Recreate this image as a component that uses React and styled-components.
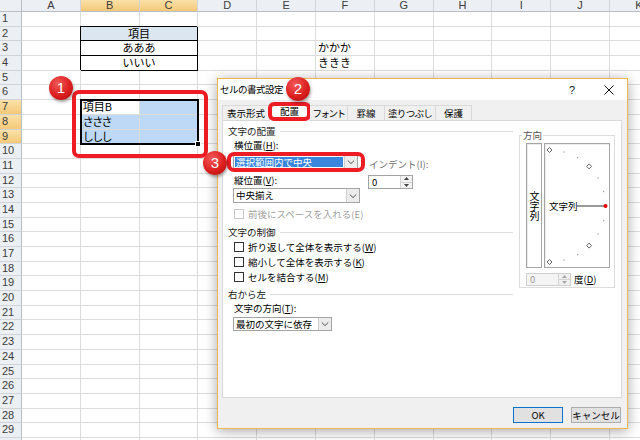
import React from 'react';
import styled, { createGlobalStyle } from 'styled-components';

const COL_W = 58.8;
const ROW_H = 14.7;
const ROW_COUNT = 30;
const COLS = ['A', 'B', 'C', 'D', 'E', 'F', 'G', 'H', 'I', 'J', 'K'];
const SELECTED_COLS = ['B', 'C'];
const SELECTED_ROWS = [7, 8, 9];

const GlobalStyle = createGlobalStyle`
  * { box-sizing: border-box; }
  html, body { margin: 0; padding: 0; background: #fff; }
  body {
    font-family: 'Noto Sans CJK JP', 'Liberation Sans', sans-serif;
    overflow: hidden;
  }
`;

const Screen = styled.div`
  position: relative;
  width: 640px;
  height: 440px;
  overflow: hidden;
`;

const sheetTemplate = `
  grid-template-columns: 22px repeat(${COLS.length}, ${COL_W}px);
  grid-template-rows: 12px repeat(${ROW_COUNT}, ${ROW_H}px);
`;

const Sheet = styled.div`
  display: grid;
  ${sheetTemplate}
`;

const OverlayGrid = styled.div`
  position: absolute;
  inset: 0;
  display: grid;
  ${sheetTemplate}
  pointer-events: none;
`;

const headerBg = '#eceff3';
const headerOn = 'linear-gradient(#fbe1a8, #f4c978)';

const Corner = styled.div`
  background: ${headerBg};
  border-right: 1px solid #b9bec6;
  border-bottom: 1px solid #b9bec6;
`;

const ColHead = styled.div`
  background: ${(p) => (p.$on ? headerOn : headerBg)};
  border-right: 1px solid #d0d4da;
  border-bottom: 1px solid #b9bec6;
  font: 11px/11px 'Liberation Sans', sans-serif;
  color: #3c3c3c;
  text-align: center;
  overflow: hidden;
`;

const RowHead = styled.div`
  background: ${(p) => (p.$on ? headerOn : headerBg)};
  border-right: 1px solid #b9bec6;
  border-bottom: 1px solid #d0d4da;
  font: 11px/13.7px 'Liberation Sans', sans-serif;
  color: #3c3c3c;
  padding-left: 2px;
`;

const Cell = styled.div`
  background: ${(p) => (p.$fill ? '#bdd9f6' : '#fff')};
  border-right: 1px solid #dcdcdc;
  border-bottom: 1px solid #dcdcdc;
  font-size: 11px;
  line-height: 13.7px;
  padding-left: 2px;
  white-space: nowrap;
  letter-spacing: ${(p) => (p.$tight ? '-1.6px' : '0')};
  color: #000;
`;

const TableCell = styled.div`
  grid-column: span 2;
  background: ${(p) => (p.$head ? '#dce6f1' : '#fff')};
  border-right: 1px solid #000;
  border-bottom: 1px solid #000;
  box-shadow: -1px -1px 0 #000;
  font-size: 11px;
  line-height: 13.7px;
  text-align: center;
  color: #000;
`;

const SelectionFrame = styled.div`
  grid-column: 3 / 5;
  grid-row: 8 / 11;
  margin: -1px;
  border: 2px solid #000;
  position: relative;
`;

const FillHandle = styled.span`
  position: absolute;
  right: -4px;
  bottom: -4px;
  width: 6px;
  height: 6px;
  background: #000;
  border: 1px solid #fff;
`;

const Callout = styled.div`
  border: 4px solid #ee1c24;
  border-radius: 7px;
  pointer-events: none;
`;

const SheetCallout = styled(Callout)`
  grid-column: 3 / 5;
  grid-row: 8 / 11;
  margin: -10px -10px -14px -9px;
  position: relative;
`;

const TabCallout = styled(Callout)`
  position: absolute;
  inset: -1px -2px 0 -2px;
  border-radius: 6px;
`;

const FieldCallout = styled(Callout)`
  position: absolute;
  inset: -3px -7px -3px -6px;
  border-radius: 7px;
`;

const Badge = styled.span`
  position: absolute;
  left: ${(p) => p.$x}px;
  top: ${(p) => p.$y}px;
  width: 24px;
  height: 24px;
  border-radius: 50%;
  background: radial-gradient(circle at 38% 32%, #f45a5a 0%, #dc1e1e 55%, #a90f0f 100%);
  box-shadow: 1px 2px 3px rgba(0, 0, 0, 0.35);
  color: #fff;
  font: 15px/24px 'Liberation Sans', sans-serif;
  text-align: center;
  z-index: 5;
`;

const cellText = {
  3: { F: 'かかか' },
  4: { F: 'ききき' },
  7: { B: '項目B' },
  8: { B: 'さささ' },
  9: { B: 'ししし' },
};

const tableRows = { 2: { text: '項目', head: true }, 3: { text: 'あああ' }, 4: { text: 'いいい' } };

const SheetRow = ({ row }) => {
  const onRow = SELECTED_ROWS.includes(row);
  const out = [<RowHead key="h" $on={onRow}>{row}</RowHead>];
  COLS.forEach((col) => {
    if (tableRows[row] && col === 'C') return;
    if (tableRows[row] && col === 'B') {
      out.push(
        <TableCell key={col} $head={tableRows[row].head}>
          {tableRows[row].text}
        </TableCell>
      );
      return;
    }
    const fill = onRow && SELECTED_COLS.includes(col) && !(row === 7 && col === 'B');
    out.push(
      <Cell key={col} $fill={fill} $tight={row === 8 || row === 9}>
        {(cellText[row] && cellText[row][col]) || ''}
      </Cell>
    );
  });
  return out;
};

/* ---------- dialog ---------- */

const Dialog = styled.div`
  position: absolute;
  left: 217px;
  top: 78px;
  width: 411px;
  height: 351px;
  display: flex;
  flex-direction: column;
  background: #f0f0f0;
  border: 1px solid #f1b64c;
  box-shadow: 0 2px 12px rgba(0, 0, 0, 0.35);
  font-family: 'Noto Sans CJK JP', sans-serif;
  font-size: 9.5px;
  color: #000;
`;

const TitleBar = styled.div`
  height: 21px;
  display: flex;
  align-items: center;
  background: #fff;
  padding-left: 2px;
`;

const Title = styled.div`
  flex: 1;
  line-height: 21px;
  letter-spacing: -0.5px;
`;

const TitleButton = styled.div`
  width: ${(p) => p.$w}px;
  height: 21px;
  margin-right: ${(p) => p.$mr || 0}px;
  display: flex;
  align-items: center;
  justify-content: center;
  font: 11px 'Liberation Sans', sans-serif;
  color: #222;
`;

const DialogBody = styled.div`
  flex: 1;
  display: flex;
  flex-direction: column;
  padding: 0 5px 0 4px;
`;

const TabStrip = styled.div`
  height: 20px;
  display: flex;
  align-items: flex-end;
  position: relative;
  z-index: 1;
`;

const Tab = styled.div`
  position: relative;
  width: ${(p) => p.$w}px;
  height: ${(p) => (p.$active ? 19 : 15)}px;
  margin-bottom: ${(p) => (p.$active ? -1 : 0)}px;
  background: ${(p) => (p.$active ? '#fff' : '#f0f0f0')};
  border: 1px solid #d9d9d9;
  border-left: none;
  border-bottom: none;
  line-height: ${(p) => (p.$active ? 17 : 14)}px;
  text-align: center;
  white-space: nowrap;
  letter-spacing: ${(p) => p.$ls || 0}px;

  &:first-child {
    border-left: 1px solid #d9d9d9;
  }
`;

const Panel = styled.div`
  width: 400px;
  height: 278px;
  background: #fff;
  border: 1px solid #d9d9d9;
  display: grid;
  grid-template-columns: 285px 96px;
  column-gap: 6px;
  align-items: start;
  padding: 3px 5px 0 5px;
`;

const Column = styled.div`
  display: flex;
  flex-direction: column;
`;

const SectionTitle = styled.div`
  display: flex;
  align-items: center;
  gap: 4px;
  height: 14px;
  line-height: 14px;
  margin-top: ${(p) => p.$mt || 0}px;
  color: #1a1a1a;

  &::after {
    content: '';
    flex: 1;
    border-top: 1px solid #dcdcdc;
  }
`;

const FieldLabel = styled.div`
  height: 14px;
  line-height: 14px;
  padding-left: ${(p) => (p.$flush ? 1 : 6)}px;
  margin-top: ${(p) => p.$mt || 0}px;
  color: ${(p) => (p.$dim ? '#707070' : '#000')};
  white-space: nowrap;
`;

const AlignBlock = styled.div`
  display: flex;
  align-items: flex-start;
`;

const IndentCol = styled.div`
  display: flex;
  flex-direction: column;
  margin-left: 8px;
  padding-top: 5px;
`;

const SelectWrap = styled.div`
  position: relative;
  margin: ${(p) => p.$mt || 0}px 0 0 5px;
  width: ${(p) => p.$w}px;
`;

const Select = styled.div`
  height: ${(p) => p.$h || 14}px;
  display: flex;
  border: 1px solid #a3a3a3;
  background: #fff;
`;

const SelectValue = styled.div`
  flex: 1;
  margin: 1px;
  padding-left: 1px;
  line-height: ${(p) => (p.$h || 14) - 4}px;
  background: ${(p) => (p.$picked ? '#3a86dc' : 'transparent')};
  color: ${(p) => (p.$picked ? '#fff' : '#000')};
  white-space: nowrap;
`;

const SelectArrow = styled.div`
  width: 13px;
  display: flex;
  align-items: center;
  justify-content: center;
  background: #ececec;
  border-left: 1px solid #cfcfcf;
`;

const Chevron = () => (
  <svg width="8" height="6" viewBox="0 0 8 6">
    <path d="M0.8 1.5 L4 4.6 L7.2 1.5" fill="none" stroke="#555" strokeWidth="1" />
  </svg>
);

const Spinner = styled.div`
  width: 45px;
  height: ${(p) => p.$h || 14}px;
  margin-top: ${(p) => p.$mt || 0}px;
  display: flex;
  border: 1px solid ${(p) => (p.$off ? '#cfcfcf' : '#a3a3a3')};
  background: ${(p) => (p.$off ? '#f4f4f4' : '#fff')};
  color: ${(p) => (p.$off ? '#9a9a9a' : '#000')};
`;

const SpinValue = styled.div`
  flex: 1;
  padding-left: 3px;
  line-height: ${(p) => (p.$h || 14) - 2}px;
`;

const SpinButtons = styled.div`
  width: 12px;
  display: flex;
  flex-direction: column;
  border-left: 1px solid #d4d4d4;
  background: ${(p) => (p.$off ? '#f0f0f0' : '#f3f3f3')};
`;

const SpinHalf = styled.div`
  flex: 1;
  display: flex;
  align-items: center;
  justify-content: center;

  & + & {
    border-top: 1px solid #d4d4d4;
  }
`;

const Tri = ({ down, off }) => (
  <svg width="5" height="3" viewBox="0 0 5 3">
    <path d={down ? 'M0 0 L5 0 L2.5 3 Z' : 'M0 3 L5 3 L2.5 0 Z'} fill={off ? '#a8a8a8' : '#444'} />
  </svg>
);

const SpinBox = ({ value, off, h, mt }) => (
  <Spinner $off={off} $h={h} $mt={mt}>
    <SpinValue $h={h}>{value}</SpinValue>
    <SpinButtons $off={off}>
      <SpinHalf>
        <Tri off={off} />
      </SpinHalf>
      <SpinHalf>
        <Tri down off={off} />
      </SpinHalf>
    </SpinButtons>
  </Spinner>
);

const CheckRow = styled.div`
  display: flex;
  align-items: center;
  gap: 4px;
  height: 15px;
  padding-left: 6px;
  margin-top: ${(p) => p.$mt || 0}px;
  color: ${(p) => (p.$off ? '#a0a0a0' : '#000')};
  white-space: nowrap;
`;

const CheckBox = styled.span`
  width: 10px;
  height: 10px;
  border: 1px solid ${(p) => (p.$off ? '#c8c8c8' : '#333')};
  background: #fff;
`;

const DirectionGroup = styled.div`
  margin-top: 11px;
  height: 153px;
  border: 1px solid #dcdcdc;
  display: flex;
  flex-direction: column;
  padding-left: 6px;
`;

const GroupLegend = styled.div`
  align-self: flex-start;
  margin: -7px 0 0 -4px;
  padding: 0 1px;
  background: #fff;
  line-height: 13px;
  color: #555;
`;

const OrientRow = styled.div`
  display: flex;
  gap: 2px;
  height: 125px;
  margin-top: 1px;
`;

const VerticalBox = styled.div`
  width: 16px;
  border: 1px solid #a5a5a5;
  box-shadow: inset 1px 1px 0 #ececec;
  display: flex;
  align-items: center;
  justify-content: center;
  writing-mode: vertical-rl;
  font-size: 10px;
  line-height: 14px;
`;

const ArcBox = styled.div`
  width: 66px;
  border: 1px solid #a5a5a5;
  box-shadow: inset 1px 1px 0 #ececec;
  display: flex;
`;

const DegreeRow = styled.div`
  display: flex;
  align-items: center;
  gap: 3px;
  margin-top: 4px;
`;

const Footer = styled.div`
  display: flex;
  justify-content: flex-end;
  gap: 8px;
  padding: 9px 1px 0 0;
`;

const Button = styled.div`
  width: 50px;
  height: 16px;
  border: 1px solid ${(p) => (p.$primary ? '#0a72d0' : '#adadad')};
  background: #e1e1e1;
  line-height: 14px;
  text-align: center;
  white-space: nowrap;
`;

const Key = styled.u`
  text-decoration: underline;
`;

const ArcDial = () => {
  const cx = 4.5;
  const cy = 62;
  const r = 56;
  const points = [-90, -75, -60, -45, -30, -15, 15, 30, 45, 60, 75, 90].map((deg) => {
    const a = (deg * Math.PI) / 180;
    return { deg, x: cx + r * Math.cos(a), y: cy - r * Math.sin(a) };
  });
  return (
    <svg width="64" height="123" viewBox="0 0 64 123">
      {points.map((pt) =>
        Math.abs(pt.deg) % 45 === 0 ? (
          <path
            key={pt.deg}
            d={`M${pt.x} ${pt.y - 2.5} L${pt.x + 2.5} ${pt.y} L${pt.x} ${pt.y + 2.5} L${pt.x - 2.5} ${pt.y} Z`}
            fill="#fff"
            stroke="#666"
            strokeWidth="1"
          />
        ) : (
          <rect key={pt.deg} x={pt.x - 0.5} y={pt.y - 0.5} width="1.2" height="1.2" fill="#9a9a9a" />
        )
      )}
      <text x="4" y="65.5" fontSize="9.5" fontFamily="'Noto Sans CJK JP', sans-serif" fill="#000">
        文字列
      </text>
      <line x1="32" y1="62" x2="59" y2="62" stroke="#333" strokeWidth="1" />
      <circle cx={cx + r} cy={cy} r="2" fill="#e00000" />
    </svg>
  );
};

const CellFormatDialog = () => (
  <Dialog>
    <TitleBar>
      <Title>セルの書式設定</Title>
      <TitleButton $w={30} $mr={4}>?</TitleButton>
      <TitleButton $w={36}>
        <svg width="10" height="10" viewBox="0 0 10 10">
          <path d="M0.5 0.5 L9.5 9.5 M9.5 0.5 L0.5 9.5" stroke="#111" strokeWidth="1" />
        </svg>
      </TitleButton>
    </TitleBar>
    <DialogBody>
      <TabStrip>
        <Tab $w={48}>表示形式</Tab>
        <Tab $w={40} $active>
          配置
          <TabCallout>
            <Badge $x={14} $y={-29}>2</Badge>
          </TabCallout>
        </Tab>
        <Tab $w={38} $ls={-1.5}>フォント</Tab>
        <Tab $w={37}>罫線</Tab>
        <Tab $w={51} $ls={-0.7}>塗りつぶし</Tab>
        <Tab $w={36}>保護</Tab>
      </TabStrip>
      <Panel>
        <Column>
          <SectionTitle>文字の配置</SectionTitle>
          <FieldLabel>
            横位置(<Key>H</Key>):
          </FieldLabel>
          <AlignBlock>
            <Column>
              <SelectWrap $w={125} $mt={3}>
                <Select>
                  <SelectValue $picked>選択範囲内で中央</SelectValue>
                  <SelectArrow>
                    <Chevron />
                  </SelectArrow>
                </Select>
                <FieldCallout>
                  <Badge $x={-28} $y={-5}>3</Badge>
                </FieldCallout>
              </SelectWrap>
              <FieldLabel $mt={4}>
                縦位置(<Key>V</Key>):
              </FieldLabel>
              <SelectWrap $w={127} $mt={1}>
                <Select $h={15}>
                  <SelectValue $h={15}>中央揃え</SelectValue>
                  <SelectArrow>
                    <Chevron />
                  </SelectArrow>
                </Select>
              </SelectWrap>
            </Column>
            <IndentCol>
              <FieldLabel $dim $flush>
                インデント(I):
              </FieldLabel>
              <SpinBox value="0" mt={4} />
            </IndentCol>
          </AlignBlock>
          <CheckRow $off $mt={3}>
            <CheckBox $off />
            前後にスペースを入れる(E)
          </CheckRow>
          <SectionTitle $mt={4}>文字の制御</SectionTitle>
          <CheckRow>
            <CheckBox />
            <span>
              折り返して全体を表示する(<Key>W</Key>)
            </span>
          </CheckRow>
          <CheckRow>
            <CheckBox />
            <span>
              縮小して全体を表示する(<Key>K</Key>)
            </span>
          </CheckRow>
          <CheckRow>
            <CheckBox />
            <span>
              セルを結合する(<Key>M</Key>)
            </span>
          </CheckRow>
          <SectionTitle $mt={3}>右から左</SectionTitle>
          <FieldLabel>
            文字の方向(<Key>T</Key>):
          </FieldLabel>
          <SelectWrap $w={99} $mt={2}>
            <Select>
              <SelectValue>最初の文字に依存</SelectValue>
              <SelectArrow>
                <Chevron />
              </SelectArrow>
            </Select>
          </SelectWrap>
        </Column>
        <DirectionGroup>
          <GroupLegend>方向</GroupLegend>
          <OrientRow>
            <VerticalBox>文字列</VerticalBox>
            <ArcBox>
              <ArcDial />
            </ArcBox>
          </OrientRow>
          <DegreeRow>
            <SpinBox value="0" off h={13} />
            <span>
              度(<Key>D</Key>)
            </span>
          </DegreeRow>
        </DirectionGroup>
      </Panel>
      <Footer>
        <Button $primary>OK</Button>
        <Button>キャンセル</Button>
      </Footer>
    </DialogBody>
  </Dialog>
);

const App = () => (
  <Screen>
    <GlobalStyle />
    <Sheet>
      <Corner />
      {COLS.map((col) => (
        <ColHead key={col} $on={SELECTED_COLS.includes(col)}>
          {col}
        </ColHead>
      ))}
      {Array.from({ length: ROW_COUNT }, (_, i) => (
        <SheetRow key={i} row={i + 1} />
      ))}
    </Sheet>
    <OverlayGrid>
      <SelectionFrame>
        <FillHandle />
      </SelectionFrame>
      <SheetCallout>
        <Badge $x={-27} $y={-18}>1</Badge>
      </SheetCallout>
    </OverlayGrid>
    <CellFormatDialog />
  </Screen>
);

export default App;
